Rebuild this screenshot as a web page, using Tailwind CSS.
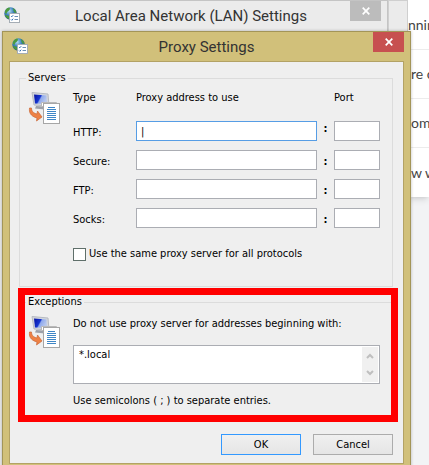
<!DOCTYPE html>
<html lang="en">

<head>
    <meta charset="UTF-8">
    <meta name="viewport" content="width=device-width, initial-scale=1.0">
    <title>Proxy Settings</title>
    <script src="https://cdn.jsdelivr.net/npm/@tailwindcss/browser@4"></script>
</head>

<body class="relative min-h-screen overflow-hidden bg-[#f2f3f5] font-['DejaVu_Sans_Condensed','Noto_Sans',sans-serif] text-[11px] leading-4 text-black">
    <!-- Shared icons -->
    <svg class="absolute h-0 w-0">
        <defs>
            <linearGradient id="screen" x1="0" y1="0" x2="1" y2="0.4">
                <stop offset="0" stop-color="#0712a0" />
                <stop offset="0.5" stop-color="#1635d0" />
                <stop offset="0.6" stop-color="#8fa9ec" />
                <stop offset="1" stop-color="#b8c8ee" />
            </linearGradient>
            <radialGradient id="globe" cx="0.4" cy="0.3" r="0.7">
                <stop offset="0" stop-color="#b5dcf2" />
                <stop offset="0.5" stop-color="#3c82bd" />
                <stop offset="1" stop-color="#17407c" />
            </radialGradient>
        </defs>
        <symbol id="net-icon" viewBox="0 0 16 16">
            <circle cx="6.500" cy="6.500" r="6.200" fill="url(#globe)" />
            <path d="M1 4C2 1.500 4 .6 5.500 .5L6 2 4.500 4 3 5 2.500 7 1 6zM9 1l2 1.500 1.500 3L11 6 9.500 4zM2 8l3 1 0 3C3 11.500 1.500 10 1 8z" fill="#4b9a3e" />
            <rect x="5.500" y="6.500" width="10" height="9" fill="#fff" stroke="#a5adb5" />
            <path d="M7 9l.8.8L9.200 8.200M7 12.500l.8.800 1.400-1.600" fill="none" stroke="#2f73b8" stroke-width="1" />
            <path d="M10.500 9.500h3.500M10.500 12.500h3.500" stroke="#6c8fb5" />
        </symbol>
        <symbol id="proxy-icon" viewBox="0 0 33 34">
            <path d="M4 0.500L20 2 21 14 6 13z" fill="#d3d6dc" stroke="#b6bac2" />
            <path d="M6 2.500L18.500 3.500 19 12 7 11.500z" fill="url(#screen)" />
            <path d="M8 14l8 .5 1 3-10-1z" fill="#9da1aa" />
            <path d="M1.500 16C1 20 2 24 9 26L8.500 29 14 25 9.500 19 9 22C5 21 3.500 19 3.500 16z" fill="#ee8144" stroke="#c9683a" stroke-width="0.700" />
            <path d="M13.500 10.500h15v4h-15z" fill="#fff" stroke="#b9b9b9" />
            <rect x="15.500" y="11.500" width="16" height="20" fill="#fff" stroke="#a6a6a6" />
            <path d="M20 15.500h7M19 17.500h9M19 19.500h9M19 21.500h9M19 23.500h9M19 25.500h9M19 27.500h9" stroke="#3f86c6" />
        </symbol>
    </svg>

    <!-- Web page behind the dialogs -->
    <ul class="absolute top-0 right-0 w-[21px] bg-white font-[Lato,sans-serif] text-[14px] whitespace-nowrap text-[#444] shadow-md">
        <li class="flex h-[50px] items-center border-b border-[#ececec]">nnin</li>
        <li class="flex h-[49px] items-center border-b border-[#ececec] pl-[3px]">re c</li>
        <li class="flex h-[49px] items-center border-b border-[#ececec] pl-[3px]">om</li>
        <li class="flex h-[49px] items-center pl-[3px]">w w</li>
    </ul>
    <div class="absolute top-0 right-[21px] h-24 w-5 border-t border-r border-l border-[#cfcfcf] bg-[#ebebeb]"></div>

    <!-- LAN settings window -->
    <section class="absolute top-0 right-[41px] bottom-0 left-0 border-t border-r border-[#c4c4c4] bg-[#ebebeb]">
        <header class="flex items-start pr-1.5 pl-1">
            <svg class="mt-1.5 h-4 w-4 shrink-0"><use href="#net-icon" /></svg>
            <h2 class="flex-1 pt-[3px] pl-3 text-center font-[Roboto,sans-serif] text-[15px] leading-6 whitespace-nowrap text-[#333]">Local Area Network (LAN) Settings</h2>
            <button type="button" aria-label="Close LAN settings" class="flex h-5 w-[31px] items-center justify-center bg-[#bcbcbc]">
                <svg class="h-2 w-2" viewBox="0 0 8 8"><path d="M.7 .7l6.600 6.600M7.300 .7L.7 7.300" stroke="#fff" stroke-width="1.700" /></svg>
            </button>
        </header>
    </section>

    <!-- Proxy settings window -->
    <main class="relative mt-[31px] mr-[18px] ml-0.5 border border-[#a39558] bg-[#d1c07a] px-1.5 pb-1.5 shadow-[0_0_3px_rgba(0,0,0,0.25)]">
        <header class="flex h-[29px] items-start">
            <svg class="mt-1.5 ml-[3px] h-4 w-4 shrink-0"><use href="#net-icon" /></svg>
            <h1 class="flex-1 pt-[3px] pl-3 text-center font-[Roboto,sans-serif] text-[15px] leading-6 text-[#333]">Proxy Settings</h1>
            <button type="button" aria-label="Close" class="flex h-5 w-[31px] items-center justify-center bg-[#c75050]">
                <svg class="h-2 w-2" viewBox="0 0 8 8"><path d="M.7 .7l6.600 6.600M7.300 .7L.7 7.300" stroke="#fff" stroke-width="1.700" /></svg>
            </button>
        </header>

        <form class="border border-[#b3a265] bg-[#efefef] pt-2 pr-2.5 pb-2 pl-[9px]">
            <fieldset class="border border-[#dcdcdc] pr-3 pb-6 pl-2">
                <legend class="-ml-0.5 px-0.5">Servers</legend>
                <div class="flex gap-3 pt-1">
                    <svg class="mt-0.5 h-[34px] w-[33px] shrink-0"><use href="#proxy-icon" /></svg>
                    <div class="flex-1">
                        <div class="grid grid-cols-[63px_1fr_17px_46px] gap-y-[9px]">
                            <span class="mb-1.5">Type</span>
                            <span class="col-span-2">Proxy address to use</span>
                            <span>Port</span>

                            <label for="http" class="pt-1">HTTP:</label>
                            <input id="http" type="text" value="|" class="h-5 min-w-0 border border-[#569de5] bg-white px-1 outline-none">
                            <span class="text-center font-bold">:</span>
                            <input type="text" aria-label="HTTP port" class="h-5 min-w-0 border border-[#abadb3] bg-white px-1">

                            <label for="secure" class="pt-1">Secure:</label>
                            <input id="secure" type="text" class="h-5 min-w-0 border border-[#abadb3] bg-white px-1">
                            <span class="pt-1 text-center font-bold">:</span>
                            <input type="text" aria-label="Secure port" class="h-5 min-w-0 border border-[#abadb3] bg-white px-1">

                            <label for="ftp" class="pt-1">FTP:</label>
                            <input id="ftp" type="text" class="h-5 min-w-0 border border-[#abadb3] bg-white px-1">
                            <span class="pt-1 text-center font-bold">:</span>
                            <input type="text" aria-label="FTP port" class="h-5 min-w-0 border border-[#abadb3] bg-white px-1">

                            <label for="socks" class="pt-1">Socks:</label>
                            <input id="socks" type="text" class="h-5 min-w-0 border border-[#abadb3] bg-white px-1">
                            <span class="pt-1 text-center font-bold">:</span>
                            <input type="text" aria-label="Socks port" class="h-5 min-w-0 border border-[#abadb3] bg-white px-1">
                        </div>
                        <div class="mt-[18px] flex items-center gap-[3px]">
                            <input id="same" type="checkbox" class="h-[13px] w-[13px] appearance-none border border-[#5f6f6a] bg-white">
                            <label for="same">Use the same proxy server for all protocols</label>
                        </div>
                    </div>
                </div>
            </fieldset>

            <div class="relative mt-[7px]">
                <fieldset class="border border-[#dcdcdc] pr-3 pb-3 pl-2">
                    <legend class="-ml-0.5 px-0.5">Exceptions</legend>
                    <div class="flex gap-3 pt-1.5">
                        <svg class="h-[34px] w-[33px] shrink-0"><use href="#proxy-icon" /></svg>
                        <div class="flex-1">
                            <label for="exceptions" class="block">Do not use proxy server for addresses beginning with:</label>
                            <div class="mt-[13px] flex h-[39px] border border-[#abadb3] bg-white p-px">
                                <textarea id="exceptions" class="flex-1 resize-none overflow-hidden px-1 outline-none">*.local</textarea>
                                <div class="flex w-4 flex-col items-center justify-between bg-[#f0f0f0] py-1.5">
                                    <svg class="h-1.5 w-2" viewBox="0 0 8 6"><path d="M1 5l3-3 3 3" fill="none" stroke="#bfbfbf" stroke-width="2" /></svg>
                                    <svg class="h-1.5 w-2" viewBox="0 0 8 6"><path d="M1 1l3 3 3-3" fill="none" stroke="#bfbfbf" stroke-width="2" /></svg>
                                </div>
                            </div>
                            <p class="mt-[9px]">Use semicolons ( ; ) to separate entries.</p>
                        </div>
                    </div>
                </fieldset>
                <!-- Highlight -->
                <div class="pointer-events-none absolute -top-1.5 -right-[5px] bottom-0 -left-px border-[7px] border-[#ff0000]"></div>
            </div>

            <div class="mt-3 flex justify-end gap-3">
                <button type="submit" class="h-[21px] w-20 border border-[#3399ff] bg-linear-to-b from-[#f0f0f0] to-[#e5e5e5]">OK</button>
                <button type="button" class="h-[21px] w-20 border border-[#acacac] bg-linear-to-b from-[#f0f0f0] to-[#e5e5e5]">Cancel</button>
            </div>
        </form>
    </main>
</body>

</html>
